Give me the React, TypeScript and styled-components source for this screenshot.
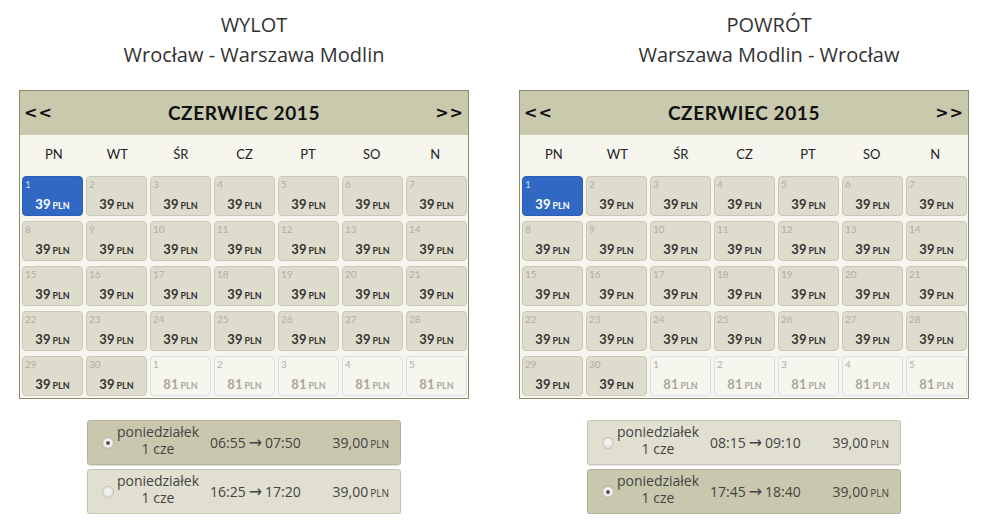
import React from "react";
import styled, { createGlobalStyle } from "styled-components";

const Global = createGlobalStyle`
  html, body { margin: 0; padding: 0; background: #ffffff; overflow: hidden; }
  body { font-family: "Open Sans", "Liberation Sans", sans-serif; }
`;

const Page = styled.div`
  display: flex;
  gap: 50px;
  padding: 10px 0 0 19px;
`;

const Column = styled.section`
  width: 450px;
  display: flex;
  flex-direction: column;
`;

const Title = styled.div<{ $shift: number }>`
  width: 450px;
  margin-left: ${(p) => p.$shift}px;
  text-align: center;
  font-size: 20px;
  line-height: 30px;
  color: #333333;
`;

const Calendar = styled.div`
  margin-top: 20px;
  border: 1px solid #8c8c6c;
  background: #f7f6ee;
  font-family: "Lato", "Open Sans", sans-serif;
`;

const Header = styled.div`
  height: 44px;
  background: #c9c9ae;
  display: flex;
  align-items: center;
  justify-content: space-between;
  padding: 0 4px 2px;
  box-sizing: border-box;
  color: #111111;
  font-weight: 700;
`;

const Nav = styled.span`
  font-size: 16px;
  letter-spacing: 1px;
  font-family: "DejaVu Sans", sans-serif;
`;

const Month = styled.span`
  font-size: 19px;
  letter-spacing: 0.6px;
`;

const DayNames = styled.div`
  display: grid;
  grid-template-columns: repeat(7, 1fr);
  height: 40px;
  padding: 0 1px 3px 2px;
  box-sizing: border-box;
  align-items: center;
`;

const DayName = styled.div`
  text-align: center;
  font-size: 13px;
  color: #222222;
`;

const Grid = styled.div`
  display: grid;
  grid-template-columns: repeat(7, 61px);
  grid-auto-rows: 40px;
  column-gap: 3px;
  row-gap: 5px;
  padding: 1px 1px 2px 2px;
`;

type Kind = "normal" | "selected" | "next";

const Cell = styled.div<{ $kind: Kind }>`
  box-sizing: border-box;
  border-radius: 4px;
  border: 1px solid
    ${(p) => (p.$kind === "selected" ? "#2c5fb8" : p.$kind === "next" ? "#d5dfe9" : "#c9c8b8")};
  background: ${(p) => (p.$kind === "selected" ? "#3168c4" : p.$kind === "next" ? "#f7f6ee" : "#dedccd")};
  color: ${(p) => (p.$kind === "selected" ? "#ffffff" : p.$kind === "next" ? "#a8a8a0" : "#333333")};
  display: flex;
  flex-direction: column;
`;

const DayNum = styled.span<{ $kind: Kind }>`
  font-size: 10px;
  line-height: 12px;
  padding: 1px 0 0 2px;
  color: ${(p) => (p.$kind === "selected" ? "#c9d6f0" : "#b0afa6")};
`;

const Price = styled.span`
  text-align: center;
  font-weight: 700;
  font-size: 13px;
  line-height: 16px;
  margin-top: 6px;
`;

const Small = styled.span`
  font-size: 9px;
  margin-left: 2px;
`;

const Options = styled.div`
  margin: 21px auto 0;
  width: 314px;
  display: flex;
  flex-direction: column;
  gap: 4px;
`;

const Option = styled.div<{ $active: boolean }>`
  box-sizing: border-box;
  height: 45px;
  border-radius: 3px;
  border: 1px solid ${(p) => (p.$active ? "#b4b398" : "#c6c5b4")};
  box-shadow: 0 1px 1px rgba(0, 0, 0, 0.12);
  background: ${(p) => (p.$active ? "#c9c8ae" : "#e0dfd0")};
  display: grid;
  grid-template-columns: 14px 84px 1fr auto;
  align-items: center;
  padding: 0 11px 0 14px;
  color: #444444;
  font-size: 14px;
`;

const Radio = styled.span<{ $on: boolean }>`
  width: 12px;
  height: 12px;
  border-radius: 50%;
  box-sizing: border-box;
  border: 1px solid #b8b8b0;
  background: radial-gradient(circle at 50% 40%, #ffffff, #dcdcd6);
  display: flex;
  align-items: center;
  justify-content: center;
  opacity: ${(p) => (p.$on ? 1 : 0.75)};
  &::after {
    content: "";
    width: 4px;
    height: 4px;
    border-radius: 50%;
    background: ${(p) => (p.$on ? "#555555" : "transparent")};
  }
`;

const DayLabel = styled.div`
  text-align: center;
  margin-top: -6px;
  display: flex;
  flex-direction: column;
`;

const DayLine = styled.span`
  line-height: 17px;
  height: 17px;
`;

const Time = styled.div`
  padding-left: 10px;
  display: flex;
  align-items: center;
`;

const Arrow = styled.span`
  font-family: "DejaVu Sans", sans-serif;
  font-size: 16px;
  margin: 0 3px;
  line-height: 1;
`;

const Cost = styled.div`
  text-align: right;
`;

const CostUnit = styled.span`
  font-size: 10px;
  margin-left: 2px;
`;

const dayNames = ["PN", "WT", "ŚR", "CZ", "PT", "SO", "N"];

type Flight = { from: string; to: string; active: boolean };

const CalendarBox = () => {
  const cells: { n: number; kind: Kind }[] = [];
  for (let i = 1; i <= 30; i++) cells.push({ n: i, kind: i === 1 ? "selected" : "normal" });
  for (let i = 1; i <= 5; i++) cells.push({ n: i, kind: "next" });
  return (
    <Calendar>
      <Header>
        <Nav>&lt;&lt;</Nav>
        <Month>CZERWIEC 2015</Month>
        <Nav>&gt;&gt;</Nav>
      </Header>
      <DayNames>
        {dayNames.map((d) => (
          <DayName key={d}>{d}</DayName>
        ))}
      </DayNames>
      <Grid>
        {cells.map((c, i) => (
          <Cell key={i} $kind={c.kind}>
            <DayNum $kind={c.kind}>{c.n}</DayNum>
            <Price>
              {c.kind === "next" ? "81" : "39"}
              <Small>PLN</Small>
            </Price>
          </Cell>
        ))}
      </Grid>
    </Calendar>
  );
};

const Leg = ({
  title,
  route,
  shift,
  flights,
}: {
  title: string;
  route: string;
  shift: number;
  flights: Flight[];
}) => (
  <Column>
    <Title $shift={shift}>
      {title}
      <br />
      {route}
    </Title>
    <CalendarBox />
    <Options>
      {flights.map((f) => (
        <Option key={f.from} $active={f.active}>
          <Radio $on={f.active} />
          <DayLabel>
            <DayLine>poniedziałek</DayLine>
            <DayLine>1 cze</DayLine>
          </DayLabel>
          <Time>
            {f.from}
            <Arrow>→</Arrow>
            {f.to}
          </Time>
          <Cost>
            39,00<CostUnit>PLN</CostUnit>
          </Cost>
        </Option>
      ))}
    </Options>
  </Column>
);

export default function App() {
  return (
    <>
      <Global />
      <Page>
        <Leg
          title="WYLOT"
          route="Wrocław - Warszawa Modlin"
          shift={10}
          flights={[
            { from: "06:55", to: "07:50", active: true },
            { from: "16:25", to: "17:20", active: false },
          ]}
        />
        <Leg
          title="POWRÓT"
          route="Warszawa Modlin - Wrocław"
          shift={25}
          flights={[
            { from: "08:15", to: "09:10", active: false },
            { from: "17:45", to: "18:40", active: true },
          ]}
        />
      </Page>
    </>
  );
}
